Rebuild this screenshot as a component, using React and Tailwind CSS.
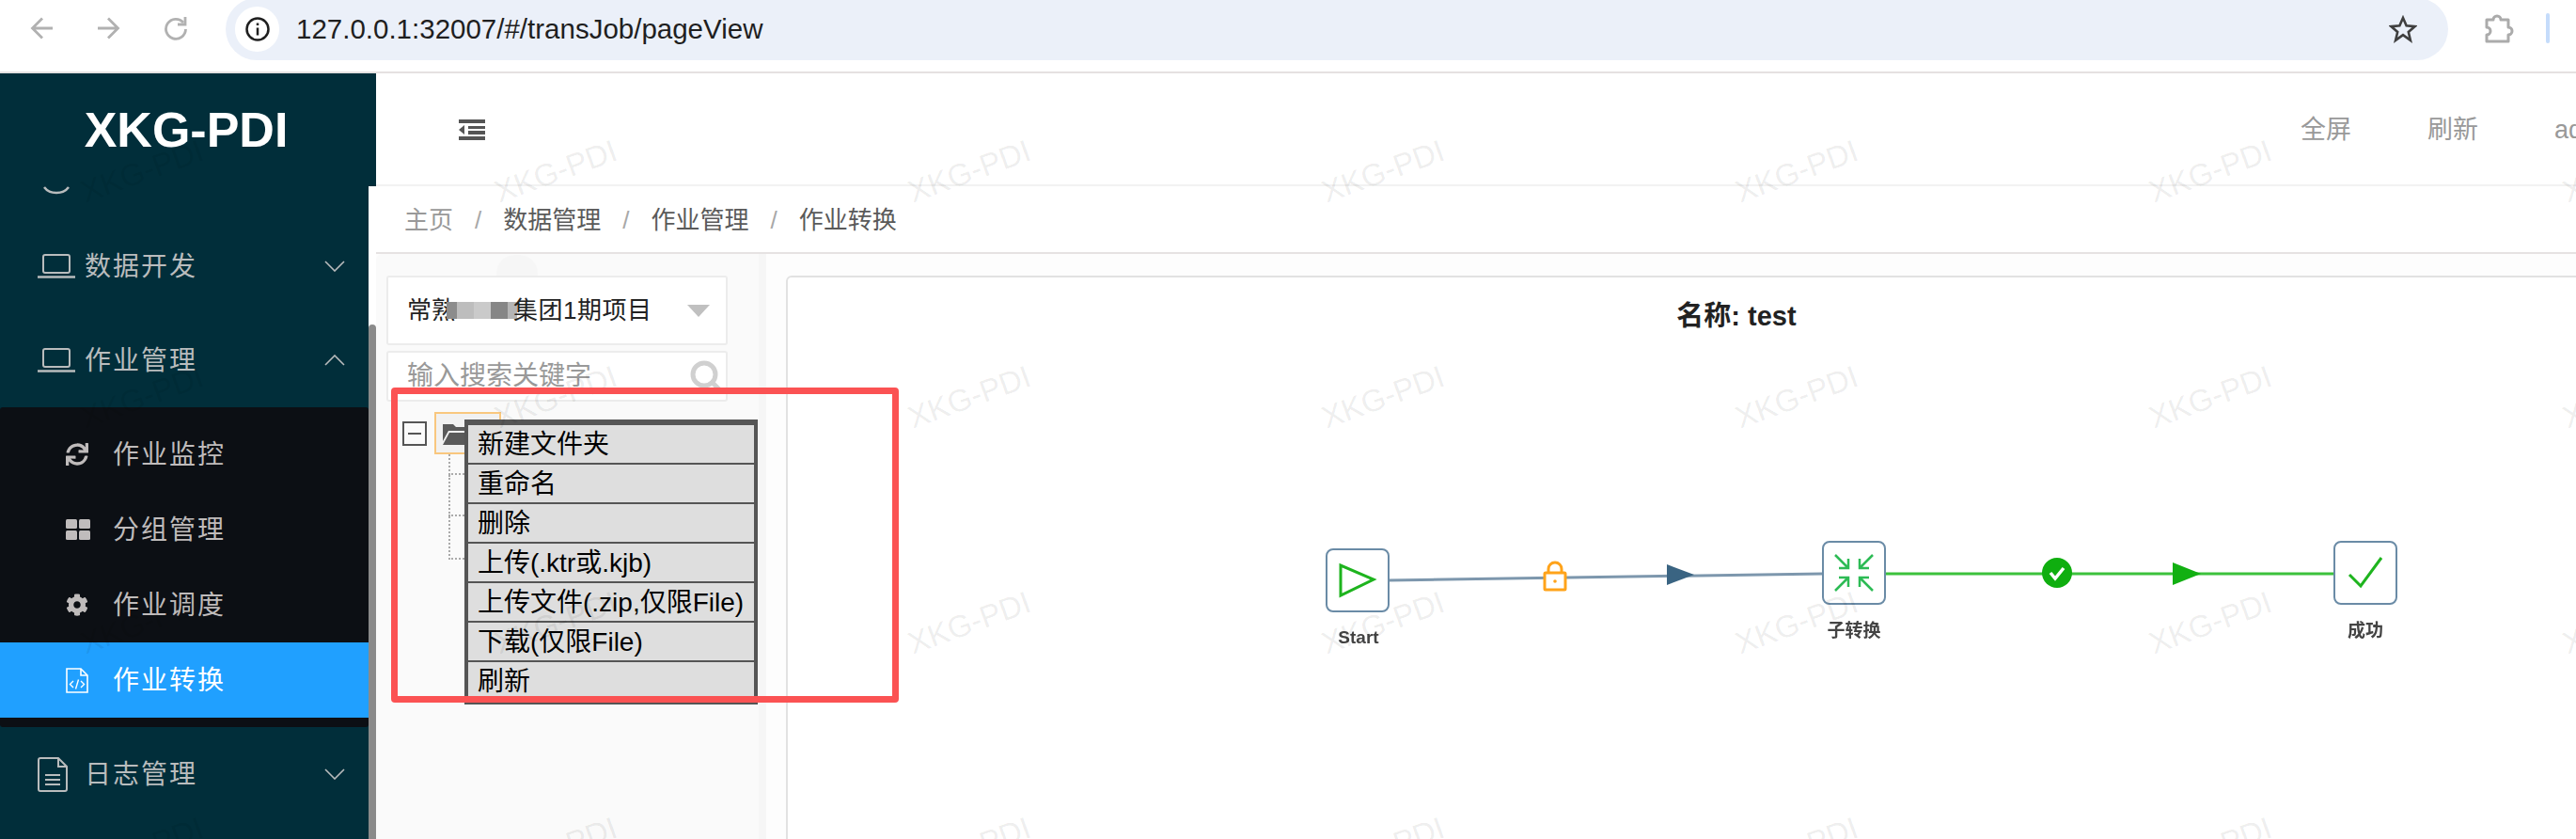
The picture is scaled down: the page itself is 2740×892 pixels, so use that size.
import React from 'react';
import { FaSync, FaCog } from 'react-icons/fa';

const CJK = "font-['Liberation_Sans','Noto_Sans_CJK_SC',sans-serif]";

// Tiled watermark positions
const markCols = [151, 591, 1031, 1471, 1911, 2351, 2791];
const markRows = [182, 422, 662, 902];

const menuItems = ['新建文件夹', '重命名', '删除', '上传(.ktr或.kjb)', '上传文件(.zip,仅限File)', '下载(仅限File)', '刷新'];

const LaptopIcon = () => (
    <svg width="40" height="26" viewBox="0 0 40 26" fill="none" stroke="#b9bcbd" strokeWidth="2">
        <rect x="6" y="1" width="28" height="19" rx="2" />
        <path d="M0 24.5h40" strokeWidth="2.5" />
    </svg>
);

const DocIcon = () => (
    <svg width="32" height="37" viewBox="0 0 32 37" fill="none" stroke="#b9bcbd" strokeWidth="2">
        <path d="M3 1h19l9 9v24a2 2 0 0 1-2 2H3a2 2 0 0 1-2-2V3a2 2 0 0 1 2-2z" />
        <path d="M22 1v9h9M8 19h16M8 24h16M8 29h16" />
    </svg>
);

const Chevron = ({ up }) => (
    <svg width="22" height="12" viewBox="0 0 22 12" fill="none" stroke="#b9bcbd" strokeWidth="1.6">
        <path d={up ? 'M1 11 11 1l10 10' : 'M1 1l10 10L21 1'} />
    </svg>
);

const GridIcon = () => (
    <svg className="block" width="26" height="22" viewBox="0 0 26 22" fill="#c0bcbc">
        <rect width="12" height="10" rx="1.5" />
        <rect x="14" width="12" height="10" rx="1.5" />
        <rect y="12" width="12" height="10" rx="1.5" />
        <rect x="14" y="12" width="12" height="10" rx="1.5" />
    </svg>
);

const FileCodeIcon = () => (
    <svg className="block" width="24" height="27" viewBox="0 0 24 27" fill="none" stroke="#fff" strokeWidth="1.6">
        <path d="M1 1h15l7 7v18H1z" />
        <path d="M16 1v7h7" />
        <path d="M8 14l-3.500 3.500L8 21M16 14l3.500 3.500L16 21M13.500 12.500l-3 10" strokeWidth="1.400" />
    </svg>
);

const NavRow = ({ icon, label, up }) => (
    <div className="flex h-[100px] items-center pl-[40px] pr-[25px]">
        <div className="w-[50px]">{icon}</div>
        <span className="flex-1 pt-[2px] text-[28px] tracking-[2px] text-[#b9bcbd]">{label}</span>
        <Chevron up={up} />
    </div>
);

const SubRow = ({ icon, label, active }) => (
    <div className={`flex h-[80px] items-center pl-[70px] ${active ? 'bg-[#20a0ff] text-white' : 'text-[#bfbbbb]'}`}>
        <div className="w-[50px]">{icon}</div>
        <span className="pt-[2px] text-[28px] tracking-[2px]">{label}</span>
    </div>
);

const Sidebar = () => (
    <aside className="flex w-[400px] shrink-0 flex-col bg-[#012e3a]">
        <div className="flex h-[120px] items-center justify-center pr-[4px]">
            <span className="text-[52px] font-bold text-white">XKG-PDI</span>
        </div>
        <div className="flex flex-1 overflow-hidden">
            <nav className="w-[392px]">
                <div className="h-[35px] pl-[46px]">
                    <svg width="28" height="10" viewBox="0 0 28 10" fill="none" stroke="#b9bcbd" strokeWidth="2.500">
                        <path d="M1 1c6 8 20 8 26 0" />
                    </svg>
                </div>
                <NavRow icon={<LaptopIcon />} label="数据开发" />
                <NavRow icon={<LaptopIcon />} label="作业管理" up />
                <div className="rounded-[3px] bg-[#0c0f14] py-[10px]">
                    <SubRow icon={<FaSync size={24} />} label="作业监控" />
                    <SubRow icon={<GridIcon />} label="分组管理" />
                    <SubRow icon={<FaCog size={24} />} label="作业调度" />
                    <SubRow icon={<FileCodeIcon />} label="作业转换" active />
                </div>
                <NavRow icon={<DocIcon />} label="日志管理" />
            </nav>
            <div className="flex w-[8px] flex-col bg-white pt-[147px]">
                <div className="flex-1 rounded-t-[4px] bg-[#8a8a8a]" />
            </div>
        </div>
    </aside>
);

const BrowserBar = () => (
    <div className="flex h-[78px] shrink-0 border-b-2 border-[#e5e1e1] bg-white">
        <div className="flex h-[60px] w-[240px] items-center gap-[46px] pl-[32px] text-[#b1b1b1]">
            <svg width="25" height="24" viewBox="0 0 25 24" fill="none" stroke="currentColor" strokeWidth="2.800">
                <path d="M24 12H3M13 1.500 2.500 12 13 22.500" />
            </svg>
            <svg width="25" height="24" viewBox="0 0 25 24" fill="none" stroke="currentColor" strokeWidth="2.800">
                <path d="M1 12h21M12 1.500 22.500 12 12 22.500" />
            </svg>
            <svg width="25" height="26" viewBox="0 0 25 26" fill="none" stroke="currentColor" strokeWidth="2.800">
                <path d="M21 7a10.500 10.500 0 1 0 2.500 7" />
                <path d="M23 1v8h-8" />
            </svg>
        </div>
        <div className="-mt-[2px] flex h-[66px] w-[2364px] items-center rounded-full bg-[#ebf0f9] pl-[10px] pr-[33px]">
            <div className="flex h-[48px] w-[47px] items-center justify-center rounded-full bg-white">
                <svg width="26" height="26" viewBox="0 0 26 26" fill="none" stroke="#1f1f1f" strokeWidth="2.500">
                    <circle cx="13" cy="13" r="11.500" />
                    <path d="M13 11.500v8M13 6.500v2.500" />
                </svg>
            </div>
            <span className="ml-[18px] flex-1 text-[29.5px] text-[#1f1f1f]">127.0.0.1:32007/#/transJob/pageView</span>
            <svg width="30" height="30" viewBox="0 0 30 30" fill="none" stroke="#3f3f3f" strokeWidth="2.600">
                <path d="M15 3l3.600 8.300 9 .8-6.800 5.900 2.100 8.800L15 21.100 7.100 26.800l2.100-8.800-6.800-5.900 9-.8z" />
            </svg>
        </div>
        <div className="flex h-[60px] flex-1 items-center pl-[38px]">
            <svg width="32" height="32" viewBox="0 0 32 32" fill="none" stroke="#ababab" strokeWidth="3">
                <path d="M3 7h7a4 4 0 0 1 8 0h8v8a4 4 0 0 1 0 8v7H3v-7a3.500 3.500 0 0 0 0-8z" strokeLinejoin="round" />
            </svg>
            <div className="ml-[34px] h-[32px] w-[4px] rounded-full bg-[#c5dcfb]" />
        </div>
    </div>
);

const Breadcrumb = () => (
    <div className="flex h-[72px] shrink-0 items-center border-b-2 border-[#e6e2e2] pl-[30px] pt-[2px] text-[26px] text-[#5a5a5a]">
        <span className="text-[#999]">主页</span>
        <span className="mx-[23px] text-[#a8a8a8]">/</span>
        <span>数据管理</span>
        <span className="mx-[23px] text-[#a8a8a8]">/</span>
        <span>作业管理</span>
        <span className="mx-[23px] text-[#a8a8a8]">/</span>
        <span>作业转换</span>
    </div>
);

const TreePanel = () => (
    <div className="relative w-[407px] shrink-0 rounded-tl-[6px] bg-[#fafafa] pl-[11px] pr-[33px] pt-[23px]">
        {/* smudge left by the screenshot's redaction */}
        <div className="absolute left-[128px] top-[1px] h-[22px] w-[44px] rounded-t-[20px] bg-[#f6f6f6]" />
        <div className="relative flex h-[74px] items-center rounded-[3px] border-2 border-[#ececec] bg-white pl-[20px] pr-[17px] text-[26px] text-[#222]">
            <span>常熟</span>
            <div className="flex h-[18px] w-[75px] shrink-0 -ml-[10px]">
                <div className="w-[11px] bg-[#8c8c8c]" />
                <div className="w-[18px] bg-[#bdbdbd]" />
                <div className="w-[18px] bg-[#cacaca]" />
                <div className="w-[18px] bg-[#868686]" />
                <div className="w-[10px] bg-[#b5b5b5]" />
            </div>
            <span className="-ml-[4px] flex-1 tracking-[0.5px]">集团1期项目</span>
            <div className="h-0 w-0 border-x-[12px] border-t-[13px] border-x-transparent border-t-[#c0c0c0]" />
        </div>
        <div className="mt-[6px] flex h-[54px] items-center rounded-[3px] border-2 border-[#ececec] bg-white pl-[20px] pr-[4px] text-[28px] text-[#999]">
            <span className="flex-1">输入搜索关键字</span>
            <svg width="34" height="34" viewBox="0 0 34 34" fill="none" stroke="#d0d0d0" strokeWidth="5">
                <circle cx="15" cy="15" r="12" />
                <path d="M24 24l9 9" />
            </svg>
        </div>
        <div className="relative -ml-[11px] mt-[11px] pl-[28px]">
            <div className="flex items-center gap-[8px]">
                <div className="flex h-[26px] w-[26px] items-center justify-center border-2 border-[#555]">
                    <div className="h-[2px] w-[14px] bg-[#555]" />
                </div>
                <div className="flex h-[45px] w-[71px] items-center border-2 border-[#f9c77e] bg-[#f1f1f1] pl-[7px]">
                    <svg width="30" height="24" viewBox="0 0 30 24" fill="#5a5a5a">
                        <path d="M0 2h11l3 3h11v4H6L0 20z" />
                        <path d="M7 11h23l-6 13H0z" />
                    </svg>
                </div>
            </div>
            <div className="ml-[49px] w-[17px]">
                <div className="h-[22px] border-b-2 border-l-2 border-dotted border-[#aaa]" />
                <div className="h-[44px] border-b-2 border-l-2 border-dotted border-[#aaa]" />
                <div className="h-[46px] border-b-2 border-l-2 border-dotted border-[#aaa]" />
            </div>
            {/* Right-click menu */}
            <div className="absolute left-[94px] top-[8px] flex w-[312px] flex-col gap-[2px] border-x-4 border-b-[5px] border-t-[6px] border-[#555] bg-[#555] text-[28px] leading-[41px] text-black">
                {menuItems.map(item => (
                    <div key={item} className="h-[40px] whitespace-nowrap bg-[#dedede] pl-[10px]">{item}</div>
                ))}
            </div>
        </div>
    </div>
);

const FlowCanvas = () => (
    <svg className="absolute left-0 top-0 blur-[0.4px]" width="1902" height="597" viewBox="838 295 1902 597" fill="none">
        <path d="M1477 617 1938 610" stroke="#7d97ad" strokeWidth="3" />
        <path d="M2005 610H2482" stroke="#3cc23c" strokeWidth="3" />
        <path d="M1773 600l29 11-29 11z" fill="#3a6482" />
        <path d="M2311 598l30 12-30 12z" fill="#12b012" />

        <rect x="1411" y="584" width="66" height="66" rx="7" fill="#fff" stroke="#6a8ba6" strokeWidth="2" />
        <path d="M1426 601v32l35-17z" stroke="#1eb41e" strokeWidth="3" />
        <rect x="1939" y="576" width="66" height="66" rx="7" fill="#fff" stroke="#6a8ba6" strokeWidth="2" />
        <path d="M1952 590l14 14m0-10v10h-10M1992 590l-14 14m0-10v10h10M1952 628l14-14m0 10v-10h-10M1992 628l-14-14m0 10v-10h10" stroke="#2dbb55" strokeWidth="2.500" />
        <rect x="2483" y="576" width="66" height="66" rx="7" fill="#fff" stroke="#6a8ba6" strokeWidth="2" />
        <path d="M2499 611l12 12 22-30" stroke="#1eb41e" strokeWidth="3" />

        <rect x="1643" y="609" width="22" height="18" rx="1" fill="#fff" stroke="#ffa31a" strokeWidth="3" />
        <path d="M1647 609v-4a7 7 0 0 1 14 0v4" stroke="#ffa31a" strokeWidth="3" />
        <circle cx="1654" cy="618" r="1.800" fill="#ffa31a" />
        <circle cx="2188" cy="609" r="16" fill="#0fae0f" />
        <path d="M2181 609l5 6 9-11" stroke="#fff" strokeWidth="3.500" />

        <g fontFamily="'Liberation Sans','Noto Sans CJK SC',sans-serif" fontSize="19" fill="#444" textAnchor="middle">
            <text x="1445" y="684">Start</text>
            <text x="1972" y="677">子转换</text>
            <text x="2516" y="677">成功</text>
        </g>
    </svg>
);

const App = () => {
    return (
        <div className={`relative flex h-[892px] w-[2740px] flex-col overflow-hidden bg-white ${CJK}`}>
            <BrowserBar />
            <div className="flex flex-1 overflow-hidden">
                <Sidebar />
                <main className="flex flex-1 flex-col overflow-hidden">
                    <div className="flex h-[120px] shrink-0 items-center border-b-2 border-[#f2f2f2] pl-[88px] pt-[2px]">
                        <svg width="28" height="22" viewBox="0 0 28 22" fill="#555">
                            <rect width="28" height="4" />
                            <rect y="18" width="28" height="4" />
                            <rect x="10" y="7" width="18" height="3" />
                            <rect x="10" y="12" width="18" height="4" />
                            <path d="M6 6v10l-6-5z" />
                        </svg>
                        <div className="ml-auto flex w-[293px] shrink-0 items-center overflow-hidden whitespace-nowrap text-[27px] text-[#999]">
                            <span>全屏</span>
                            <span className="ml-[81px]">刷新</span>
                            <span className="ml-[81px]">admin</span>
                        </div>
                    </div>
                    <Breadcrumb />
                    <div className="flex flex-1 overflow-hidden bg-[#fdfdfd]">
                        <TreePanel />
                        <div className="w-[8px] shrink-0 bg-[#f6f6f6]" />
                        <div className="flex-1 pl-[21px] pt-[23px]">
                            <div className="relative h-[700px] w-[2022px] rounded-tl-[6px] border-2 border-[#e2e2e2] bg-white pt-[21px] text-center text-[29px] font-bold leading-[40px] text-[#222]">
                                名称: test
                                <FlowCanvas />
                            </div>
                        </div>
                    </div>
                </main>
            </div>

            {/* Watermark tiles */}
            <div className="pointer-events-none absolute inset-0">
                {markRows.map(y => markCols.map(x => (
                    <span
                        key={`${x}-${y}`}
                        className="absolute -translate-x-1/2 -translate-y-1/2 -rotate-[20deg] whitespace-nowrap text-[33px] text-black/[0.08]"
                        style={{ left: x, top: y }}
                    >
                        XKG-PDI
                    </span>
                )))}
            </div>

            {/* Red annotation box */}
            <div className="pointer-events-none absolute left-[416px] top-[412px] h-[335px] w-[540px] rounded-[4px] border-[7px] border-[#fb5253]" />
        </div>
    );
};

export default App;
